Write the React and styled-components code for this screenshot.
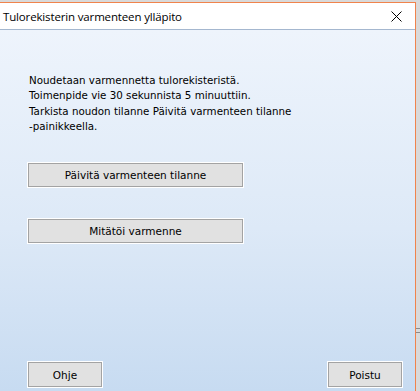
import styled, { createGlobalStyle } from "styled-components";

const Global = createGlobalStyle`
    html, body {
        margin: 0;
        padding: 0;
        height: 100%;
        background: #d9d9d9;
        overflow: hidden;
    }
    #root {
        height: 100%;
    }
`

function App() {
    return (
        <>
            <Global />
            <Screen>
                <Window>
                    <TitleBar>
                        <Title>Tulorekisterin varmenteen ylläpito</Title>
                        <CloseButton aria-label="Sulje">
                            <svg width="11" height="11" viewBox="0 0 11 11">
                                <path d="M0.5 0.5 L10.5 10.5 M10.5 0.5 L0.5 10.5" stroke="#000" strokeWidth="1" fill="none" />
                            </svg>
                        </CloseButton>
                    </TitleBar>
                    <Content>
                        <Info>
                            Noudetaan varmennetta tulorekisteristä.<br />
                            Toimenpide vie 30 sekunnista 5 minuuttiin.<br />
                            Tarkista noudon tilanne Päivitä varmenteen tilanne<br />
                            -painikkeella.
                        </Info>
                        <Actions>
                            <Button wide>Päivitä varmenteen tilanne</Button>
                            <Button wide>Mitätöi varmenne</Button>
                        </Actions>
                        <Footer>
                            <Button>Ohje</Button>
                            <Button>Poistu</Button>
                        </Footer>
                    </Content>
                </Window>
                <Edge>
                    <Grip />
                </Edge>
            </Screen>
        </>
    )
}

const Screen = styled.div`
    display: flex;
    height: 100%;
    padding-top: 2px;
    box-sizing: border-box;
`

const Window = styled.div`
    width: 415px;
    display: flex;
    flex-direction: column;
    border-top: 1px solid #f0834c;
    border-right: 1px solid #f0834c;
    background: #ffffff;
`

const TitleBar = styled.div`
    height: 26px;
    display: flex;
    align-items: center;
    justify-content: space-between;
    padding: 0 9px 0 3px;
    background: #ffffff;
    border-bottom: 1px solid #a4b7cf;
`

const Title = styled.span`
    font-family: "Open Sans", "Noto Sans", sans-serif;
    font-size: 11.5px;
    color: #000000;
    letter-spacing: -0.15px;
`

const CloseButton = styled.div`
    display: flex;
    align-items: center;
    justify-content: center;
    width: 20px;
    height: 20px;
`

const Content = styled.div`
    flex: 1;
    display: flex;
    flex-direction: column;
    padding: 43px 13px 4px 28px;
    background: linear-gradient(to bottom, #eef4fc 0%, #dde9f7 55%, #c7dbf1 100%);
    font-family: "DejaVu Sans", Verdana, sans-serif;
`

const Info = styled.p`
    margin: 0 0 0 1px;
    font-size: 10.3px;
    line-height: 15.3px;
    color: #000000;
`

const Actions = styled.div`
    display: flex;
    flex-direction: column;
    align-items: flex-start;
    gap: 32px;
    margin-top: 29px;
`

const Footer = styled.div`
    margin-top: auto;
    display: flex;
    justify-content: space-between;
`

const Button = styled.button`
    width: ${p => (p.wide ? "215px" : "74px")};
    height: ${p => (p.wide ? "24px" : "25px")};
    margin: 0;
    padding: 0;
    background: #e1e1e1;
    border: 1px solid #a3a3a3;
    box-shadow: 0 0 0 1px #ffffff;
    font-family: "DejaVu Sans", Verdana, sans-serif;
    font-size: 10.5px;
    color: #000000;
`

const Edge = styled.div`
    flex: 1;
    display: flex;
    align-items: flex-end;
    padding-bottom: 58px;
`

const Grip = styled.div`
    width: 4px;
    height: 3px;
    border-top: 1px solid #8a8a8a;
    border-bottom: 1px solid #8a8a8a;
`

export default App;
